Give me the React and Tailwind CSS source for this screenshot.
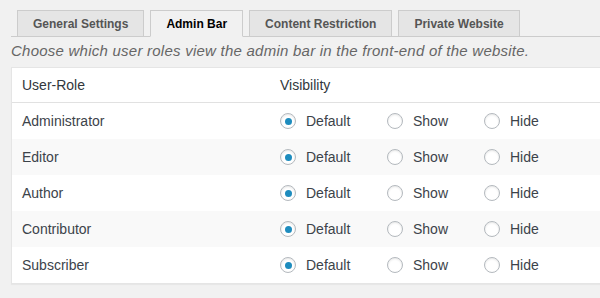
import React from "react";

const roles = ["Administrator", "Editor", "Author", "Contributor", "Subscriber"];

function Radio({ checked, label }) {
  return (
    <label className="flex items-center">
      <span className="relative flex h-4 w-4 shrink-0 items-center justify-center rounded-full border border-[#b4b9be] bg-white shadow-[inset_0_1px_2px_rgba(0,0,0,0.1)]">
        {checked && <span className="h-[7px] w-[7px] rounded-full bg-[#1e8cbe]" />}
      </span>
      <span className="ml-[10px] text-[14px] text-[#3c434a]">{label}</span>
    </label>
  );
}

function Tab({ label, active }) {
  return (
    <div
      className={
        "ml-[6px] -mb-px flex h-[27px] items-center border border-[#cccccc] px-[15px] text-[12px] font-bold " +
        (active ? "border-b-[#f1f1f1] bg-[#f1f1f1] text-black" : "bg-[#e5e5e5] text-[#555555]")
      }
    >
      {label}
    </div>
  );
}

export default function App() {
  return (
    <div
      className="h-[298px] w-[600px] overflow-hidden bg-[#f1f1f1]"
      style={{ fontFamily: '"Liberation Sans", Arial, sans-serif' }}
    >
      <div className="ml-[11px] w-[620px] pt-[10px]">
        <div className="flex border-b border-[#cccccc]">
          <Tab label="General Settings" />
          <Tab label="Admin Bar" active />
          <Tab label="Content Restriction" />
          <Tab label="Private Website" />
        </div>
        <p className="mt-[4px] text-[15px] italic leading-5 tracking-[0.24px] text-[#666666]">
          Choose which user roles view the admin bar in the front-end of the website.
        </p>
        <div className="mt-[6px] border border-[#e5e5e5] bg-white shadow-[0_1px_1px_rgba(0,0,0,0.04)]">
          <div className="flex h-[35px] items-center border-b border-[#e1e1e1] text-[14px] text-[#32373c]">
            <div className="w-[258px] pl-[10px]">User-Role</div>
            <div className="pl-[10px]">Visibility</div>
          </div>
          {roles.map((r, i) => (
            <div
              key={r}
              className={"flex h-[36px] items-center text-[14px] text-[#3c434a] " + (i % 2 === 1 ? "bg-[#f9f9f9]" : "bg-white")}
            >
              <div className="w-[258px] pl-[10px]">{r}</div>
              <div className="flex items-center pl-[10px]">
                <div className="w-[107px]">
                  <Radio checked label="Default" />
                </div>
                <div className="w-[97px]">
                  <Radio label="Show" />
                </div>
                <div>
                  <Radio label="Hide" />
                </div>
              </div>
            </div>
          ))}
        </div>
      </div>
    </div>
  );
}
